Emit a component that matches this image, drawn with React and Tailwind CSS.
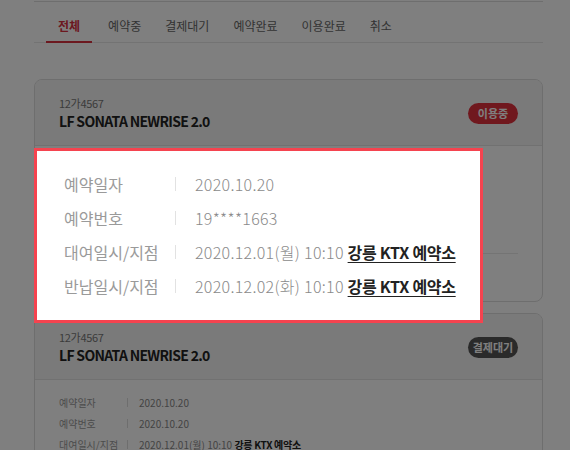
import React from "react";

const FONT = { fontFamily: "'Noto Sans CJK KR', 'Noto Sans', sans-serif" };

const tabs = ["전체", "예약중", "결제대기", "예약완료", "이용완료", "취소"];

function SmallRow({ label, value, link }) {
  return (
    <div className="flex items-center h-[21px] text-[10px] leading-[21px]">
      <span className="w-[68px] text-[#999] whitespace-nowrap">{label}</span>
      <span className="w-px h-[9px] bg-[#ddd]" />
      <span className="ml-[11px] text-[#888] whitespace-nowrap">
        {value}
        {link && (
          <>
            {" "}
            <span className="font-bold text-[#222] tracking-[-0.3px] underline underline-offset-2">{link}</span>
          </>
        )}
      </span>
    </div>
  );
}

function BigRow({ label, value, link }) {
  return (
    <div className="flex items-center h-[34px] text-[16px] leading-[34px]">
      <span className="w-[111px] text-[#9a9a9a] whitespace-nowrap">{label}</span>
      <span className="w-px h-[14px] bg-[#e2e2e2]" />
      <span className="ml-[19px] text-[#8a8a8a] font-light tracking-[0.3px] whitespace-nowrap">
        {value}
        {link && (
          <>
            {" "}
            <span className="font-bold text-[#222] tracking-[-0.3px] underline underline-offset-[3px]">{link}</span>
          </>
        )}
      </span>
    </div>
  );
}

function Card({ badge, badgeClass, rows, extra }) {
  return (
    <div className="rounded-lg border border-[#dcdcdc] overflow-hidden bg-white">
      <div className="flex items-center justify-between bg-[#f4f4f4] border-b border-[#e2e2e2] px-6 pt-[15px] pb-[14px]">
        <div>
          <div className="text-[11px] leading-[16px] text-[#777] tracking-[-0.3px]">12가4567</div>
          <div className="text-[14px] leading-[20px] font-bold text-[#222] tracking-[-0.7px]">
            LF SONATA NEWRISE 2.0
          </div>
        </div>
        <span
          className={`h-[21px] w-[50px] rounded-full flex items-center justify-center text-[11px] font-bold text-white ${badgeClass}`}
        >
          {badge}
        </span>
      </div>
      <div className="px-6 pt-[12px]">
        {rows.map((r, i) => (
          <SmallRow key={i} {...r} />
        ))}
        {extra}
      </div>
    </div>
  );
}

const rows1 = [
  { label: "예약일자", value: "2020.10.20" },
  { label: "예약번호", value: "19****1663" },
  { label: "대여일시/지점", value: "2020.12.01(월) 10:10", link: "강릉 KTX 예약소" },
  { label: "반납일시/지점", value: "2020.12.02(화) 10:10", link: "강릉 KTX 예약소" },
];

const rows2 = [
  { label: "예약일자", value: "2020.10.20" },
  { label: "예약번호", value: "2020.10.20" },
  { label: "대여일시/지점", value: "2020.12.01(월) 10:10", link: "강릉 KTX 예약소" },
  { label: "반납일시/지점", value: "2020.12.02(화) 10:10", link: "강릉 KTX 예약소" },
];

export default function App() {
  return (
    <div className="relative w-[570px] h-[450px] overflow-hidden bg-white" style={FONT}>
      <div className="ml-[34px] w-[509px]">
        <div className="mt-px h-px bg-[#dddddd]" />
        <div className="flex border-b border-[#e6e6e6] pl-3">
          {tabs.map((t, i) => (
            <div
              key={t}
              className={`h-[41px] -mb-px px-3 pt-[9px] flex items-center text-[12px] border-b-2 ${
                i === 0 ? "mr-1 border-[#d9303e] text-[#d9303e] font-bold" : "border-transparent text-[#666]"
              }`}
            >
              {t}
            </div>
          ))}
        </div>

        <div className="mt-9 flex flex-col gap-[11px]">
          <Card
            badge="이용중"
            badgeClass="bg-[#e0303d]"
            rows={rows1}
            extra={<div className="mt-[11px] h-px bg-[#e8e8e8] mb-[47px]" />}
          />
          <Card badge="결제대기" badgeClass="bg-[#555]" rows={rows2} />
        </div>
      </div>

      <div className="absolute inset-0 bg-black/50" />

      <div className="absolute left-[34px] top-[148px] w-[449px] h-[175px] bg-white border-[3px] border-[#f5434f] pl-[27px] pt-[16px]">
        {rows1.map((r, i) => (
          <BigRow key={i} {...r} />
        ))}
      </div>
    </div>
  );
}
